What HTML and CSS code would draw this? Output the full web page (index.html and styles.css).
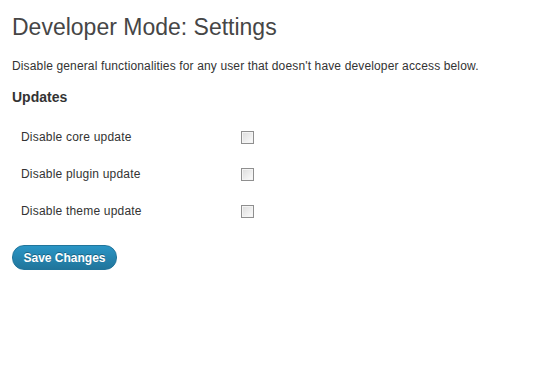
FILE: index.html
```html
<!DOCTYPE html>
<html>

<head>
    <title>Developer Mode: Settings</title>
    <meta name="viewport" content="width=device-width, initial-scale=1" />
    <link rel="stylesheet" href="styles.css">
</head>

<body>
    <div class="wrap">
        <h2>Developer Mode: Settings</h2>
        <p class="intro">Disable general functionalities for any user that doesn't have developer access below.</p>
        <h3>Updates</h3>
        <table class="form-table">
            <tr>
                <th>Disable core update</th>
                <td><input type="checkbox" id="core_update" /></td>
            </tr>
            <tr>
                <th>Disable plugin update</th>
                <td><input type="checkbox" id="plugin_update" /></td>
            </tr>
            <tr>
                <th>Disable theme update</th>
                <td><input type="checkbox" id="theme_update" /></td>
            </tr>
        </table>
        <p class="submit">
            <button class="button-primary">Save Changes</button>
        </p>
    </div>
</body>

</html>
```

FILE: styles.css
```css
html {
    font-family: "Liberation Sans", Arial, sans-serif;
}

body {
    margin: 0;
    background-color: #fff;
    color: #333;
    font-size: 12px;
}

.wrap {
    padding: 0 12px;
}

h2 {
    font-size: 23px;
    font-weight: normal;
    color: #464646;
    margin: 0;
    padding: 13px 0 4px;
    line-height: 29px;
}

.intro {
    margin: 12px 0;
    line-height: 16px;
    letter-spacing: 0.14px;
}

h3 {
    font-size: 14px;
    font-weight: bold;
    color: #333;
    margin: 15px 0 14px;
}

.form-table {
    border-collapse: collapse;
}

.form-table th {
    width: 200px;
    padding: 10px 10px 10px 9px;
    font-weight: normal;
    text-align: left;
    height: 17px;
    line-height: 17px;
    letter-spacing: 0.2px;
}

.form-table td {
    padding: 10px 10px;
}

.form-table input[type="checkbox"] {
    -webkit-appearance: none;
    appearance: none;
    display: block;
    width: 13px;
    height: 13px;
    margin: 0 0 0 0;
    border: 1px solid #8f8f8f;
    background: linear-gradient(135deg, #dcdcdc, #fdfdfd);
    box-shadow: inset 0 0 0 1px #f4f4f4;
}

.submit {
    margin: 15px 0;
}

.button-primary {
    font-family: "Liberation Sans", Arial, sans-serif;
    font-size: 12px;
    font-weight: bold;
    color: #fff;
    text-shadow: 0 -1px 0 rgba(0, 0, 0, 0.3);
    background: linear-gradient(to bottom, #2a95c5, #21759b);
    border: 1px solid #21759b;
    border-radius: 12px;
    height: 25px;
    width: 105px;
    padding: 0;
}
```
